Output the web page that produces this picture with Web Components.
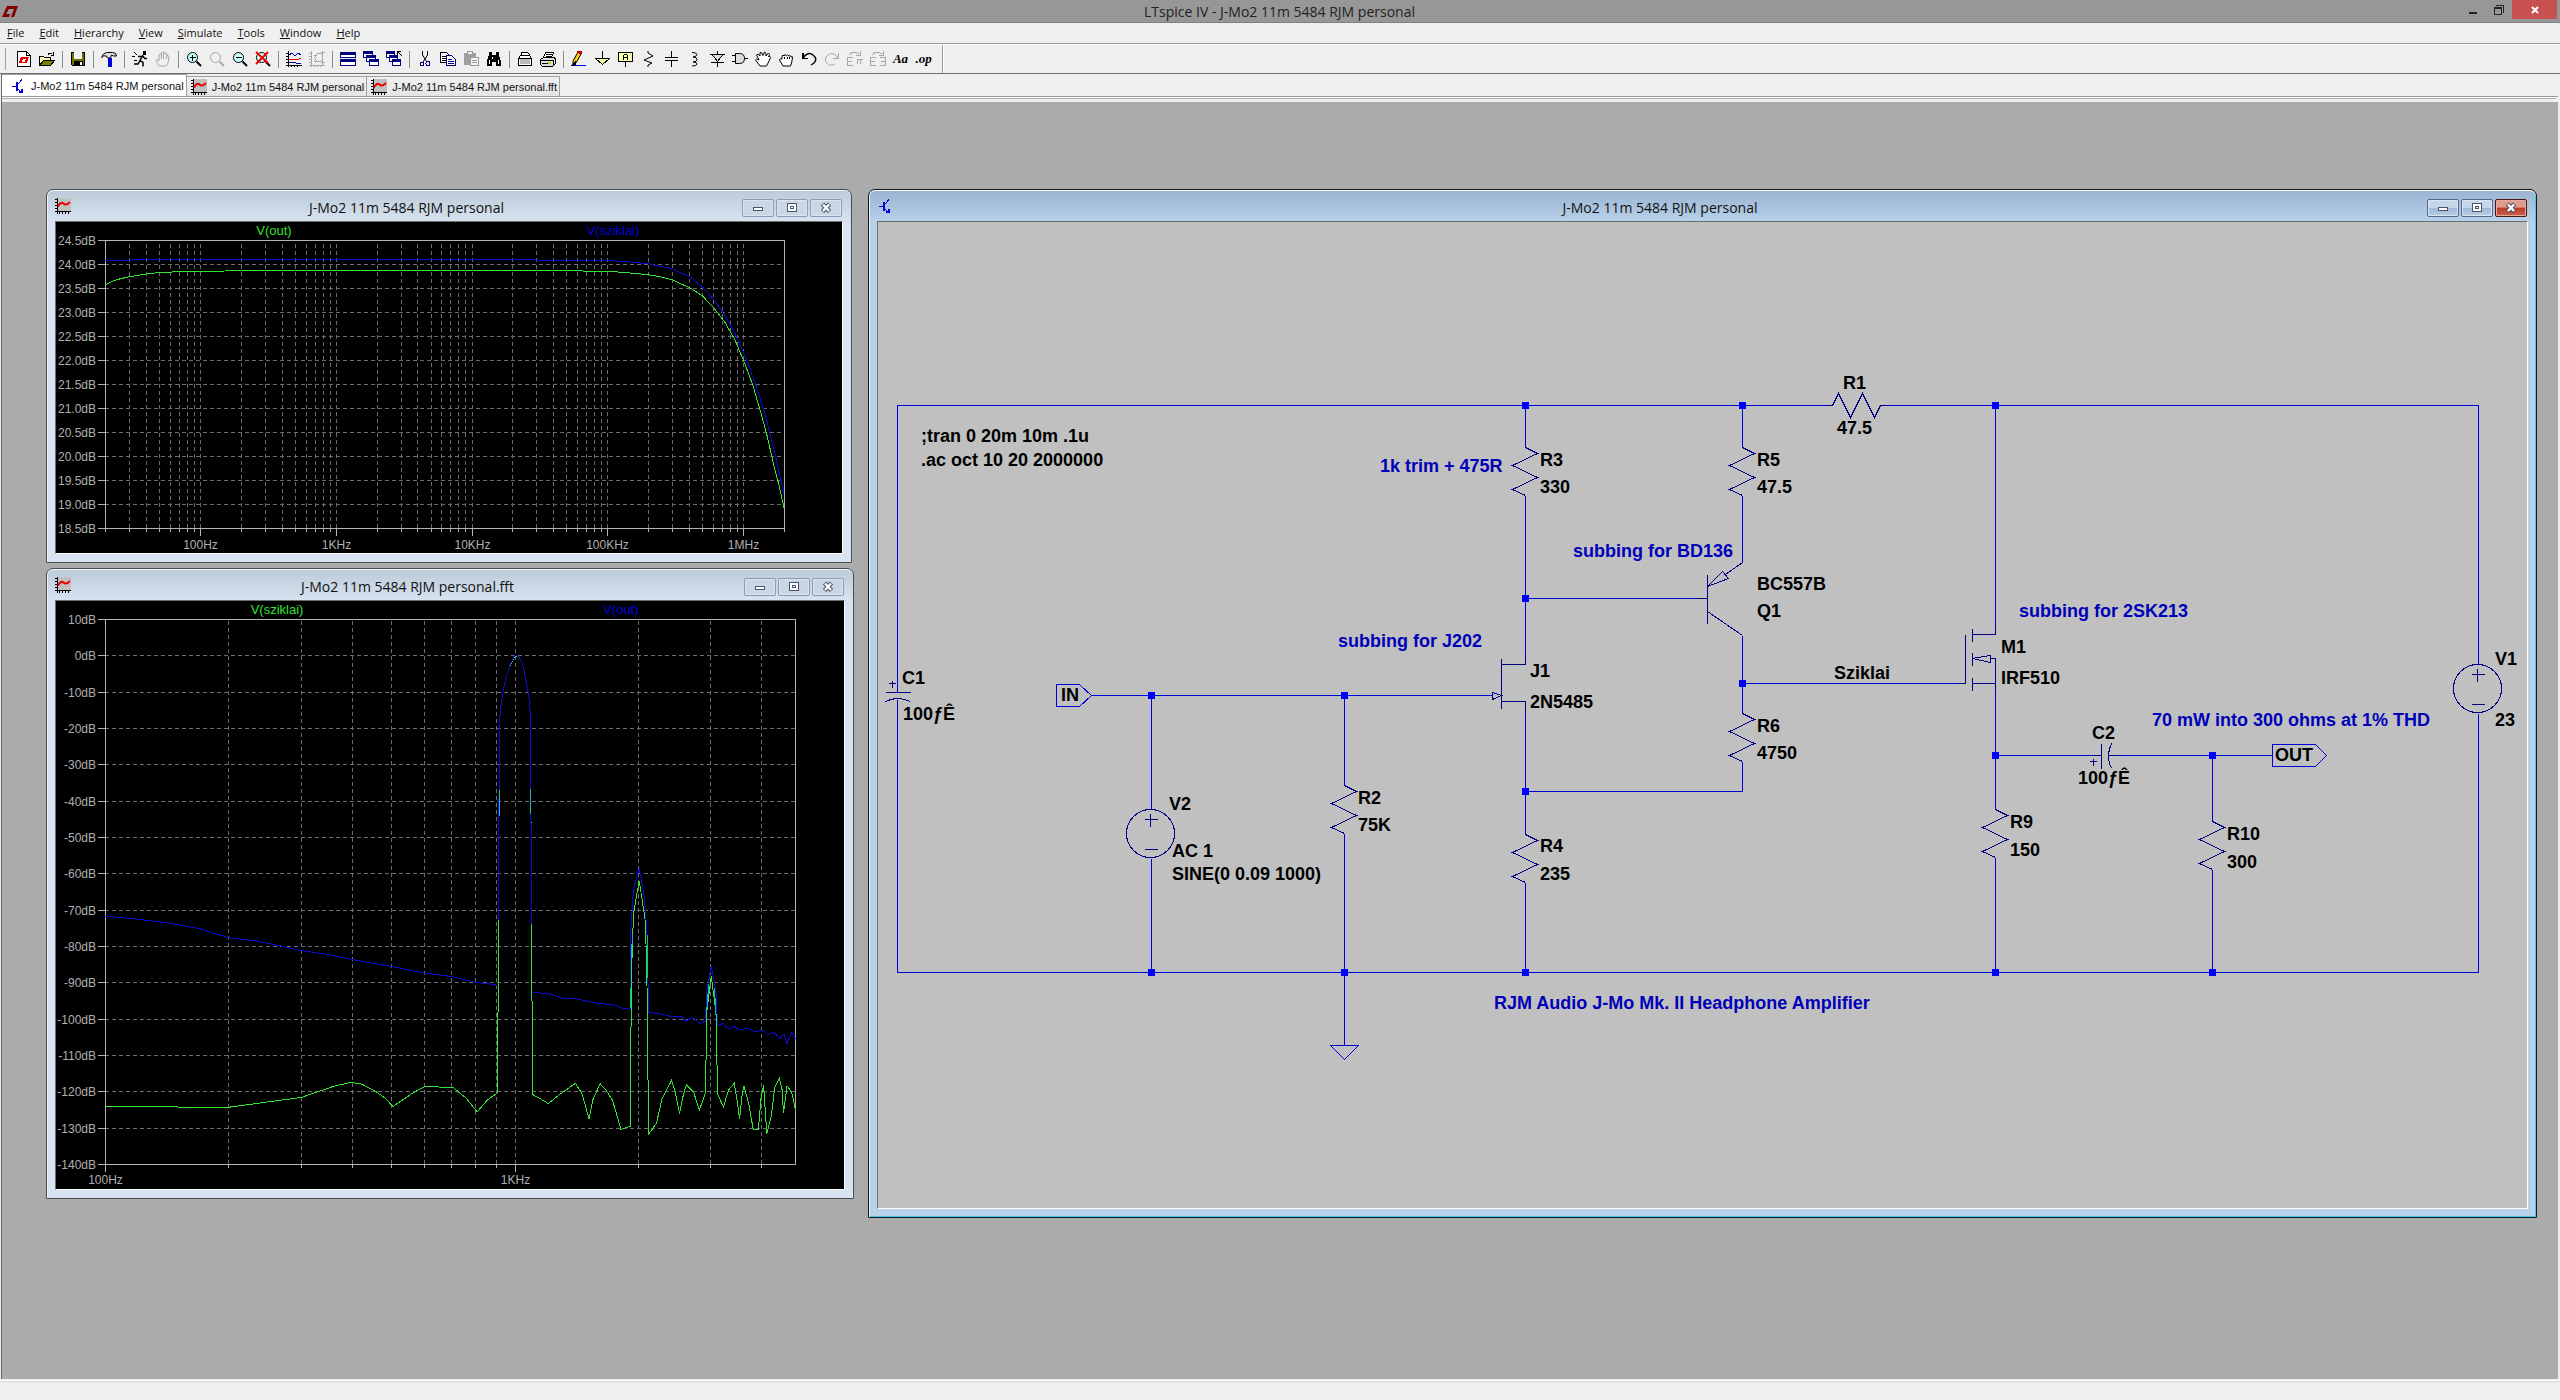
<!DOCTYPE html>
<html lang="en">
<head>
<meta charset="utf-8">
<title>LTspice IV - J-Mo2 11m 5484 RJM personal</title>
<style>
  html, body { height: 100%; }
  body { margin: 0; font-family: "Open Sans", "Noto Sans", sans-serif; color: #000; overflow: hidden; }
  .bode { left: 44px; top: 87px; width: 806px; height: 374px; }
  .fft { left: 44px; top: 466px; width: 808px; height: 631px; }
  .schematic { left: 866px; top: 87px; width: 1669px; height: 1029px; }
</style>
</head>
<body>
<spice-app>
  <spice-titlebar slot="title">LTspice IV - J-Mo2 11m 5484 RJM personal</spice-titlebar>
  <spice-menu slot="menu" items="File,Edit,Hierarchy,View,Simulate,Tools,Window,Help"></spice-menu>
  <spice-toolbar slot="toolbar"></spice-toolbar>
  <spice-tabs slot="tabs">
    <spice-tab icon="bjt" active>J-Mo2 11m 5484 RJM personal</spice-tab>
    <spice-tab icon="plot">J-Mo2 11m 5484 RJM personal</spice-tab>
    <spice-tab icon="plot">J-Mo2 11m 5484 RJM personal.fft</spice-tab>
  </spice-tabs>
  <mdi-window class="bode" icon="plot" caption="J-Mo2 11m 5484 RJM personal"><wave-plot kind="bode"></wave-plot></mdi-window>
  <mdi-window class="fft" icon="plot" caption="J-Mo2 11m 5484 RJM personal.fft"><wave-plot kind="fft"></wave-plot></mdi-window>
  <mdi-window class="schematic" icon="bjt" active caption="J-Mo2 11m 5484 RJM personal"><circuit-sheet></circuit-sheet></mdi-window>
</spice-app>

<script>
const svg = (body, w = 16, h = 16) =>
  `<svg width="${w}" height="${h}" viewBox="0 0 ${w} ${h}" fill="none" stroke="#000" shape-rendering="crispEdges" aria-hidden="true">${body}</svg>`;

const lens = (fill, col, inner, handle = '#000') =>
  `<circle cx="6.5" cy="6.5" r="5" fill="${fill}" stroke="${col}" shape-rendering="auto"/><path d="M10.5 10.5L15 15" stroke="${handle}" stroke-width="2" shape-rendering="auto"/>${inner}`;

const ICONS = {
  bjt: svg('<g stroke="#0000d8"><path d="M2 8.5h4"/><path d="M7 4v9" stroke-width="2"/><path d="M7.5 6.5L12 1.5M7.5 10.5L12.5 15.5"/><path d="M12 11v4M9 14h4" stroke-width="1.5"/></g>'),
  plot: svg('<path d="M2 0h14v13H2z" fill="#c0c0c0" stroke="none"/><path d="M2.5 0v16M0 1.5h2M0 4.5h2M0 7.5h2M0 10.5h2M0 13.5h16M4.5 14v2M7.5 14v2M10.5 14v2M13.5 14v2"/><path d="M3 8.500Q6 3 8.500 5.500T15 4" stroke="#e00" stroke-width="2" shape-rendering="auto"/>'),
  new: svg('<path d="M1.500.500h9l4 4v11h-13z" fill="#fff"/><path d="M10.500.500v4h4"/><path d="M5 6h8l-2 6H3z" fill="#e00" stroke="none"/><path d="M7 8h3l-1 3H6z" fill="#fff" stroke="none"/>'),
  open: svg('<path d="M.500 14.500v-9h4l1 1h6v3" fill="#ffffb0"/><path d="M.500 14.500l4-5h11l-4 5z" fill="#808000"/><path d="M9 3.500q2-3 4.500 0M14.500 1v3h-3"/>'),
  save: svg('<path d="M1.500 1.500h13v13h-12l-1-1z" fill="#707000"/><path d="M4 1h8v7H4z" fill="#f0f0f0" stroke="none"/><path d="M4 10h9v5H4z" fill="#000" stroke="none"/><path d="M10 11h2v3h-2z" fill="#f0f0f0" stroke="none"/>'),
  hammer: svg('<path d="M.500 6.500q1-4 5-5h6q4 0 4 3.500h-3l-2-1-1 3h-3l-1-2q-3-1-5 1.500z" fill="#e0e0e0" shape-rendering="auto"/><path d="M8.500 7v9" stroke="#0000e0" stroke-width="4"/>'),
  run: svg('<circle cx="12.500" cy="2" r="2" fill="#000" stroke="none"/><path d="M11 4L8 9.500l3 2v4M8 9.500L6 13H2M6 5.500h5l2 2h2" stroke-width="1.500" shape-rendering="auto"/><path d="M2 1.500l3 2M0 5.500h3M2 9h3"/>'),
  halt: svg('<path d="M4 15l-3-5q0-2 2-1l1 1V4q1-2 2 0V2q1-2 2 0V1.500q1-2 2 0V3q1-2 2 0v2q2-1 2 1l-1 6-2 3z" stroke="#a8a8a8" shape-rendering="auto"/><path d="M6.500 3v5M8.500 2v6M11.500 3v5" stroke="#a8a8a8"/>'),
  zin: svg(lens('#c8ffff', '#000', '<path d="M3.500 6.500h6M6.500 3.500v6" stroke-width="1.500"/>')),
  pan: svg(lens('none', '#a8a8a8', '', '#a8a8a8')),
  zout: svg(lens('#c8ffff', '#000', '<path d="M3.500 6.500h6" stroke-width="1.500"/>')),
  zfit: svg(lens('#c8ffff', '#000', '<path d="M1 1l12 11M13 1L1 13" stroke="#e00" stroke-width="2" shape-rendering="auto"/>')),
  traces: svg('<path d="M2.500 0v16M0 14.500h16M0 2.500h2M0 5.500h2M0 8.500h2M0 11.500h2M5.500 15v1M8.500 15v1M11.500 15v1"/><path d="M3 4l3-2 3 3 3-3 3 2M3 12l3-1 4 1h5" stroke="#00a"/><path d="M3 9l4-1 4 1 4-2" stroke="#e00"/>'),
  fit: svg('<path d="M2.500 0v16M0 14.500h16M0 2.500h2M0 5.500h2M0 8.500h2M0 11.500h2M5.500 15v1M8.500 15v1M11.500 15v1M5 4.500h3M5 10.500h3M13.500 0v14M12 1.500h4M12 11.500h4" stroke="#a8a8a8"/><circle cx="10" cy="6.500" r="4" stroke="#a8a8a8"/>'),
  tile: svg('<path d="M.500 1.500h15v5H.500zM.500 8.500h15v6H.500z" fill="#fff" stroke="#000080"/><path d="M0 1h16v3H0zM0 8h16v3H0z" fill="#000080" stroke="none"/>'),
  cascade: svg('<g fill="#fff" stroke="#000080"><path d="M.500.500h9v6h-9zM3.500 4.500h9v6h-9zM6.500 8.500h9v6h-9z"/><path d="M1 1.500h8M4 5.500h8M7 9.500h8" stroke-width="2"/></g>'),
  closeall: svg('<g fill="#fff" stroke="#000080"><path d="M.500.500h8v6h-8zM3.500 4.500h8v6h-8zM6.500 8.500h8v6h-8z"/><path d="M1 1.500h7M4 5.500h7M7 9.500h7" stroke-width="2"/></g><path d="M11.500 4V.500H15M12 1l4 4"/>'),
  cut: svg('<path d="M5.500 0v4L10 11M10.500 0v4L6 11" shape-rendering="auto"/><circle cx="5" cy="13" r="2" stroke="#000080"/><circle cx="11" cy="12.500" r="2" stroke="#000080"/>'),
  copy: svg('<path d="M.500 1.500h6l3 3v7h-9z" fill="#fff"/><path d="M2 5.500h4M2 7.500h4M2 9.500h4"/><path d="M6.500 4.500h5l4 4v6h-9z" fill="#fff" stroke="#000080"/><path d="M8 8.500h4M8 10.500h6M8 12.500h6" stroke="#000080"/>'),
  paste: svg('<path d="M1 2h12v12H1z" fill="#a0a0a0" stroke="none"/><path d="M4.500.500h5v3h-5z" fill="#eee" stroke="#999"/><path d="M7.500 6.500h8v8h-8z" fill="#f4f4f4" stroke="#999"/><path d="M9 9.500h5M9 11.500h5" stroke="#999"/>'),
  find: svg('<path d="M3 1h3v3h4V1h3v3l2 6v5h-5v-4H6v4H1v-5l2-6z" fill="#000" stroke="none"/><path d="M3.500 9v4M12.500 9v4M6.500 6v2" stroke="#fff"/>'),
  setup: svg('<path d="M4.500 5.500v-4h6l2 2v2" fill="#fff"/><path d="M1.500 7.500l2-3h9l2 3v7h-13z" fill="#fff"/><path d="M3 8h10v5H3z" fill="#bbb" stroke="none"/><path d="M1 7.500h14"/>'),
  print: svg('<path d="M3.500 6.500l2-5h8l-2 5" fill="#fff"/><path d="M6 3.500h6M5.500 5h5"/><path d="M.500 8.500l3-2h11l1 2v4l-3 3h-10l-2-2z" fill="#ddd"/><path d="M1 9.500h12v4M2 12.500h8" /><path d="M8 11h3v2H8z" fill="#cc0" stroke="none"/>'),
  wire: svg('<path d="M2 13l0-3L7 1l3 2-5 9z" fill="#fc0" shape-rendering="auto"/><path d="M6.500 1L10 3l1-2-3-1z" fill="#e00" stroke="#a00"/><path d="M1 14h3v-3z" fill="#000"/><path d="M2 14.500h13" stroke="#00e"/>'),
  gnd: svg('<path d="M8 0v7.500"/><path d="M1.500 7.500h14l-7 6z" fill="#e8ffa0"/>'),
  label: svg('<path d="M1.500 1.500h14v9h-14z" fill="#ffffb0"/><path d="M8.500 11v5M6.500 8.500V5l1-1.500h2l1 1.500v3.500M6.500 6.500h4"/>'),
  res: svg('<path d="M8 0v2l5 3-9 4 8 3-4 2v2" shape-rendering="auto"/>'),
  cap: svg('<path d="M8.500 0v6M2 6.500h13M2 9.500h13M8.500 10v6" stroke-width="1.500"/>'),
  ind: svg('<path d="M6 1.500q5 0 5 2t-4 2.500q4 0 4 2.500T7 11q4 0 4 2t-5 2" shape-rendering="auto"/>'),
  diode: svg('<path d="M8.500 0v16M1 3.500h15M2 11.500h13"/><path d="M3 3.500h11l-5.500 7z" fill="#ddd"/>'),
  gate: svg('<path d="M0 4.500h4M0 10.500h4M12 7.500h4"/><path d="M3.500 2.500h4q5 0 5 5t-5 5h-4z" fill="#ddd" shape-rendering="auto"/>'),
  move: svg('<path d="M5 15L.500 9Q1 7 4 9L1.500 4Q3 2 5 5L5 1.500q2-1 3 3L9.500 1q2 0 1.500 4l2.500-3q2 1 0 4l1-1q2 1 0 4l-3 6z" fill="#fff" shape-rendering="auto"/>'),
  drag: svg('<path d="M5 15L1.500 9Q2 7 4 8V5q1-2 2 0 1-3 2.500 0 1-2 2.500 0 2-1 2 1 2-1 1.500 1l-1 5-1 3z" fill="#fff" shape-rendering="auto"/><path d="M6.500 6v2M9 6v2M11.500 6v2"/>'),
  undo: svg('<path d="M2 2v5.500h5" stroke-width="1.500"/><path d="M2 7Q7 0 12 4t1 8l-3 2" stroke-width="1.500" shape-rendering="auto"/>'),
  redo: svg('<path d="M14 2v5.500H9" stroke="#a8a8a8"/><path d="M14 7Q9 0 4 4t-1 8q3 4 8 1" stroke="#a8a8a8" shape-rendering="auto"/>'),
  mirror: svg('<path d="M6 14.500H.500v-8H6M1 10.500h4M16 13v-4.500h-6V13M13 9v4M2 4q5-5 10-1M13 0v4H9" stroke="#a8a8a8"/>'),
  rotate: svg('<path d="M6 14.500H.500v-8H6M1 10.500h4M10 14.500h5.500v-8H10M15 10.500h-4M2 4q5-5 10-1M13 0v4H9" stroke="#a8a8a8"/>')
};

const define = (name, render) => customElements.define(name, class extends HTMLElement {
  connectedCallback() {
    if (!this.shadowRoot) this.attachShadow({ mode: 'open' }).innerHTML = render(this);
  }
});

define('spice-app', () => `
<style>
  :host { display: flex; flex-direction: column; height: 100vh; background: #efefef; }
  main { flex: 1; position: relative; overflow: hidden; background: #ababab;
         border-left: 1px solid #686868; margin: 0 2px 0 1px; }
  footer { height: 19px; border-top: 1px solid #fff; margin-top: 1px; box-shadow: inset 0 1px #d4d4d4; background: #efefef; }
</style>
<slot name="title"></slot><slot name="menu"></slot><slot name="toolbar"></slot><slot name="tabs"></slot>
<main><slot></slot></main><footer></footer>`);

define('spice-titlebar', () => `
<style>
  :host { display: flex; height: 22px; background: #979797; border-bottom: 1px solid #808080; font-size: 14px; line-height: 23px; }
  .logo { width: 112px; padding-left: 2px; }
  .logo svg { display: block; margin-top: 3px; }
  h1 { flex: 1; margin: 0; font: inherit; text-align: center; color: #222; }
  nav { display: flex; width: 112px; justify-content: flex-end; padding-right: 3px; }
  button { border: 0; padding: 0; background: none; width: 26px; height: 19px; display: grid; place-items: center; }
  button.close { width: 45px; background: #c75050; }
</style>
<div class="logo">${svg('<path d="M5 3H16L12 14H9L12 6H7L4 11H8L7 14H0z" fill="#800000" stroke="none" shape-rendering="auto"/>')}</div>
<h1><slot></slot></h1>
<nav>
  <button aria-label="Minimize">${svg('<path d="M4 10.500h8" stroke="#222" stroke-width="2"/>')}</button>
  <button aria-label="Restore">${svg('<path d="M3.500 5.500h7v7h-7z" stroke="#222"/><path d="M5 3.500h7.500V11" stroke="#222"/><path d="M3 6h8" stroke="#222" stroke-width="2"/>')}</button>
  <button class="close" aria-label="Close">${svg('<path d="M5 5l6 6M11 5l-6 6" stroke="#fff" stroke-width="2" shape-rendering="auto"/>')}</button>
</nav>`);

define('spice-menu', el => `
<style>
  :host { display: flex; gap: 15px; padding: 0 7px; height: 20px; border-bottom: 1px solid #999; }
  button { border: 0; padding: 0; background: none; font: 11px/20px "Open Sans", "Noto Sans", sans-serif; color: #111; }
  span { display: block; }
  span::first-letter { text-decoration: underline; }
</style>
${el.getAttribute('items').split(',').map(t => `<button><span>${t}</span></button>`).join('')}`);

define('spice-toolbar', () => {
  const groups = ['new open', 'save', 'hammer', 'run halt', 'zin pan zout zfit', 'traces fit', 'tile cascade closeall',
    'cut copy paste find', 'setup print', 'wire gnd label res cap ind diode gate move drag undo redo mirror rotate'];
  const cells = groups.map(g => g.split(' ').map(n => `<button aria-label="${n}">${ICONS[n]}</button>`).join('')).join('<i></i>');
  return `
<style>
  :host { display: flex; align-items: center; height: 28px; border-top: 1px solid #fff; border-bottom: 1px solid #707070; }
  button { width: 23px; height: 22px; border: 0; padding: 0; background: none; display: grid; place-items: center; color: #000; }
  svg { display: block; }
  i { width: 1px; height: 17px; margin: 0 3px 0 4px; background: #8c8c8c; }
  .grip { width: 3px; height: 22px; margin: 0 6px 0 3px; border-right: 1px solid #a0a0a0; box-sizing: border-box; }
  .end { height: 28px; margin-left: 7px; background: #999; box-shadow: 1px 0 #fff; }
  .txt { font: italic bold 13px/16px "Liberation Serif", serif; }
</style>
<div class="grip"></div>${cells}<button class="txt">Aa</button><button class="txt">.op</button><i class="end"></i>`;
});

define('spice-tabs', () => `
<style>
  :host { display: block; height: 28px; background: #efefef; margin: 0 2px 0 1px; border-left: 1px solid #686868; }
  div { display: flex; align-items: flex-end; height: 22px; border-bottom: 1px solid #9a9a9a; }
  hr { margin: 1px 2px 0 0; border: 0; height: 1px; background: #aaa; box-shadow: 0 -1px #fff; }
</style>
<div role="tablist"><slot></slot></div><hr>`);

define('spice-tab', el => `
<style>
  :host { display: block; }
  button { display: flex; align-items: center; gap: 5px; height: 20px; padding: 0 2px 0 4px; background: linear-gradient(#f0f0f0, #e4e4e4);
           border: 1px solid #a0a0a0; border-left-width: 0; border-bottom: 0; color: #111;
           font: 11px/20px "Liberation Sans", Arial, sans-serif; white-space: nowrap; }
  :host([active]) button { height: 22px; padding: 0 2px 0 8px; background: #fff; }
  svg { display: block; }
</style>
<button role="tab">${ICONS[el.getAttribute('icon')]}<slot></slot></button>`);

define('mdi-window', el => `
<style>
  :host { position: absolute; box-sizing: border-box; display: flex; flex-direction: column; padding: 0 8px 8px;
          border: 1px solid #474b52; border-radius: 7px 7px 1px 1px; background: linear-gradient(#bccad9, #d7e3f0 32px);
          box-shadow: inset 0 1px #f4f8fc, inset 1px 0 #eaf1f8; }
  :host([active]) { border-color: #101820; background: linear-gradient(#99b4d1, #b9d1ea 32px);
          box-shadow: inset 0 1px #fff, inset 1px 0 #e4f0fa, inset -1px -1px #45c8e6; }
  header { display: flex; align-items: center; height: 31px; flex: none; padding-right: 1px; box-sizing: border-box; }
  .icon { height: 16px; }
  .icon svg { display: block; }
  h2 { flex: 1; margin: 0; padding-top: 4px; font-weight: 400; font-size: 14px; line-height: 20px; text-align: center; color: #111; }
  nav { display: flex; gap: 2px; }
  button { width: 32px; height: 18px; margin-top: 4px; box-sizing: border-box; padding: 0; display: grid; place-items: center;
           border: 1px solid #8a9bb2; border-radius: 2px; background: #c9d6e5; box-shadow: inset 0 0 0 1px #dbe5ef; }
  :host([active]) button { border-color: #4f6a8c; background: linear-gradient(#c3d6ea 50%, #9db9d6 50%, #b6cee6); }
  :host([active]) .close { border-color: #481818; background: linear-gradient(#e09a8c 45%, #bb3a28 50%, #d0604c); box-shadow: inset 0 0 0 1px #e8a89c; }
  button svg { display: block; }
  section { flex: 1; min-height: 0; display: flex; border: 1px solid; border-color: #6c6c6c #fff #fff #6c6c6c; }
  ::slotted(*) { flex: 1; min-width: 0; }
</style>
<header>
  <span class="icon">${ICONS[el.getAttribute('icon')]}</span>
  <h2>${el.getAttribute('caption')}</h2>
  <nav>
    <button aria-label="Minimize">${svg('<path d="M3.500 7.500h9v3h-9z" fill="#fff" stroke="#4a5468"/>')}</button>
    <button aria-label="Maximize">${svg('<path d="M3.500 3.500h9v8h-9z" fill="#fff" stroke="#4a5468"/><path d="M6.500 6.500h3v2h-3z" stroke="#4a5468"/>')}</button>
    <button class="close" aria-label="Close">${svg('<g shape-rendering="auto"><path d="M4.500 4l7 7.500M11.500 4l-7 7.500" stroke="#4a5468" stroke-width="4.500"/><path d="M5 4.500l6 6.500M11 4.500L5 11" stroke="#fff" stroke-width="2.500"/></g>')}</button>
  </nav>
</header>
<section><slot></slot></section>`);

/* Waveform viewer. Traces are polylines in the units given by "span", stretched over the plot box. */
const PLOTS = {
  bode: {
    view: [56, 222, 786, 331], box: [105, 240, 784, 528], span: [1300, 864],
    y: { from: 24.5, step: 0.5, n: 12, digits: 1 }, fmin: 20, fmax: 2e6, labels: { 100: '100Hz', 1e3: '1KHz', 1e4: '10KHz', 1e5: '100KHz', 1e6: '1MHz' },
    legend: [['V(out)', 274, 235, '#35e235'], ['V(sziklai)', 613, 235, '#0000d8']], labelY: 549,
    traces: [
      ['#0a0ad0', '0,59 105,58 107,56 823,56 825,59 960,60 1000,64 1040,70 1085,85 1120,110 1142,138 1165,178 1185,223 1205,278 1225,348 1245,433 1265,533 1283,648 1299,760'],
      ['#35e235', '0,133 15,121 30,114 45,109 80,100 105,96 150,93 310,90 795,90 960,92 995,96 1040,103 1060,108 1085,118 1120,143 1142,165 1165,203 1185,243 1205,298 1225,373 1240,438 1255,518 1267,588 1280,678 1290,738 1299,802']
    ]
  },
  fft: {
    view: [56, 601, 788, 588], box: [105, 619, 795, 1164], span: [1320, 1315],
    y: { from: 10, step: 10, n: 15, digits: 0 }, fmin: 100, fmax: 4830, labels: { 100: '100Hz', 1e3: '1KHz' },
    legend: [['V(sziklai)', 277, 614, '#35e235'], ['V(out)', 621, 614, '#0000e0']], labelY: 1184,
    traces: [
      ['#35e235', '0,1175 120,1175 150,1177 235,1177 375,1153 437,1126 470,1117 490,1121 515,1137 535,1155 550,1175 585,1145 610,1127 665,1129 690,1155 711,1188 730,1160 750,1142 752,724 753,420 754,240 757,205 760,178 766,140 773,113 783,88 790,89 798,108 805,150 811,195 813,236 815,730 817,1146 830,1155 847,1168 870,1145 899,1119 912,1145 925,1205 932,1160 946,1120 957,1135 970,1160 986,1230 1004,1223 1006,860 1010,710 1021,630 1033,730 1036,885 1039,1242 1054,1215 1065,1155 1083,1112 1090,1140 1098,1192 1105,1150 1111,1123 1125,1140 1136,1184 1148,1142 1150,950 1159,860 1168,950 1171,1145 1182,1176 1192,1135 1203,1119 1207,1150 1213,1204 1217,1155 1221,1125 1230,1165 1239,1230 1249,1230 1254,1155 1259,1124 1265,1242 1274,1195 1280,1130 1289,1107 1294,1130 1297,1190 1304,1125 1313,1142 1320,1183'],
      ['#0a0ad0', '0,716 60,723 120,732 180,746 235,768 290,776 340,789 370,798 420,807 470,820 550,838 610,853 665,862 710,876 740,880 750,883'],
      ['#0a0ad0', '752,724 752,600 753,400 754,240 757,205 760,178 766,140 773,113 783,86 790,89 798,108 805,150 811,195 813,236 815,736'],
      ['#0a0ad0', '817,900 848,903 875,914 900,915 940,926 970,929 990,938 1004,940 1005,750 1010,650 1021,600 1031,670 1036,760 1039,948 1060,951 1085,959 1100,957 1110,969 1123,960 1137,975 1148,969 1150,900 1159,835 1168,900 1171,980 1182,974 1191,989 1203,981 1212,991 1230,986 1242,995 1258,991 1266,1001 1280,997 1290,1012 1298,1000 1304,1024 1312,996 1320,1013']
    ],
    overlap: [[754, 411, 754, 474], [813, 408, 813, 468], [1008, 760, 1006, 820], [1005, 890, 1005, 938], [1036, 762, 1036, 865], [1154, 880, 1150, 950], [1165, 890, 1168, 955]]
  }
};

define('wave-plot', el => {
  const p = PLOTS[el.getAttribute('kind')], [l, t, r, b] = p.box, W = r - l, H = b - t;
  const fx = f => Math.round(l + Math.log10(f / p.fmin) / Math.log10(p.fmax / p.fmin) * W) + .5;
  const sx = v => (l + .5 + v / p.span[0] * W).toFixed(1), sy = v => (t + .5 + v / p.span[1] * H).toFixed(1);
  let grid = '', tick = '', text = '';
  for (let i = 0; i <= p.y.n; i++) {
    const y = Math.round(t + i * H / p.y.n) + .5, v = p.y.from - i * p.y.step;
    if (i && i < p.y.n) grid += `M${l} ${y}H${r}`;
    tick += `M${l - 7} ${y}H${l}`;
    text += `<text x="96" y="${y + 4}" text-anchor="end">${v.toFixed(p.y.digits)}dB</text>`;
  }
  for (let d = 10; d < 1e7; d *= 10) for (let k = 1; k < 10; k++) {
    const f = d * k;
    if (f < p.fmin || f > p.fmax) continue;
    const x = fx(f);
    if (f > p.fmin && f < p.fmax) grid += `M${x} ${b}V${t}`;
    tick += `M${x} ${b}v${k === 1 ? 8 : 4}`;
    if (p.labels[f]) text += `<text x="${x}" y="${p.labelY}" text-anchor="middle">${p.labels[f]}</text>`;
  }
  const lines = p.traces.map(([c, pts]) =>
    `<polyline stroke="${c}" points="${pts.split(' ').map(q => { const [x, y] = q.split(','); return sx(x) + ',' + sy(y); }).join(' ')}"/>`).join('');
  const cyan = (p.overlap || []).map(([a, c, d, e]) => `<path stroke="#18b8b8" d="M${sx(a)} ${sy(c)}L${sx(d)} ${sy(e)}"/>`).join('');
  return `
<style>
  :host { display: block; background: #000; }
  svg { display: block; width: 100%; height: 100%; }
  text { font: 12px "Liberation Sans", Arial, sans-serif; fill: #b0b0b0; stroke: none; }
  .legend text { font-size: 13px; fill: inherit; }
</style>
<svg viewBox="${p.view.join(' ')}" preserveAspectRatio="xMinYMin" fill="none" stroke-width="1" shape-rendering="crispEdges">
  <path d="${grid}" stroke="#6c6c6c" stroke-dasharray="4 3"/>
  <path d="M${l + .5} ${t + .5}H${r + .5}V${b + .5}H${l + .5}z${tick}" stroke="#b4b4b4"/>
  ${lines}${cyan}${text}
  <g class="legend">${p.legend.map(([s, x, y, c]) => `<g fill="${c}"><text x="${x}" y="${y}" text-anchor="middle">${s}</text></g>`).join('')}</g>
</svg>`;
});

/* Schematic editor. */
define('circuit-sheet', () => {
  const rv = (x, y) => `M${x} ${y}l12 6l-25 12l25 12l-25 12l13 6`;
  const source = (x, y) => `<circle cx="${x}" cy="${y}" r="24"/><path d="M${x - 6} ${y - 14}h13M${x} ${y - 20}v13M${x - 6} ${y + 16}h13"/>`;
  const nodes = [[1525, 405], [1742, 405], [1995, 405], [1525, 598], [1151, 695], [1344, 695], [1742, 683], [1995, 755], [2212, 755], [1525, 791],
    [1151, 972], [1344, 972], [1525, 972], [1995, 972], [2212, 972]];
  const names = [[921, 442, ';tran 0 20m 10m .1u'], [921, 466, '.ac oct 10 20 2000000'], [902, 684, 'C1'], [903, 720, '100ƒÊ'], [1061, 701, 'IN'],
    [1540, 466, 'R3'], [1540, 493, '330'], [1843, 389, 'R1'], [1837, 434, '47.5'], [1757, 466, 'R5'], [1757, 493, '47.5'],
    [1757, 590, 'BC557B'], [1757, 617, 'Q1'], [1530, 677, 'J1'], [1530, 708, '2N5485'], [1834, 679, 'Sziklai'], [1757, 732, 'R6'], [1757, 759, '4750'],
    [2001, 653, 'M1'], [2001, 684, 'IRF510'], [2092, 739, 'C2'], [2078, 784, '100ƒÊ'], [2275, 761, 'OUT'], [2495, 665, 'V1'], [2495, 726, '23'],
    [2010, 828, 'R9'], [2010, 856, '150'], [2227, 840, 'R10'], [2227, 868, '300'], [1169, 810, 'V2'], [1172, 857, 'AC 1'], [1172, 880, 'SINE(0 0.09 1000)'],
    [1358, 804, 'R2'], [1358, 831, '75K'], [1540, 852, 'R4'], [1540, 880, '235']];
  const notes = [[1380, 472, '1k trim + 475R'], [1338, 647, 'subbing for J202'], [1573, 557, 'subbing for BD136'], [2019, 617, 'subbing for 2SK213'],
    [2152, 726, '70 mW into 300 ohms at 1% THD'], [1494, 1009, 'RJM Audio J-Mo Mk. II Headphone Amplifier']];
  const put = a => a.map(([x, y, s]) => `<text x="${x}" y="${y}">${s}</text>`).join('');
  return `
<style>
  :host { display: block; background: #c0c0c0; }
  svg { display: block; width: 100%; height: 100%; }
  text { font: bold 18px "Liberation Sans", Arial, sans-serif; }
</style>
<svg viewBox="878 222 1649 986" preserveAspectRatio="xMinYMin" fill="none" stroke-width="1" shape-rendering="crispEdges">
  <g transform="translate(.5 .5)">
  <path stroke="#0000d8" d="M897 692V405H1832M1880 405H2478V664M2478 713V972H897V699
    M1525 405V447M1525 495V664M1525 598H1700M1742 405V447M1742 495V562M1742 635V713M1742 761V791H1525M1525 701V834M1525 882V972
    M1995 405V634M1995 683V809M1995 857V972M1742 683H1960M1995 755H2101M2108 755H2272M2212 755V821M2212 869V972
    M1091 695H1491M1151 695V809M1151 858V972M1344 695V785M1344 833V1045M1330 1045H1358L1344 1059z
    M1056 684H1079L1091 695L1079 706H1056zM2272 744H2315L2326 755L2315 766H2272z"/>
  <g stroke="#000080">
    <path d="${rv(1525, 447)}${rv(1742, 447)}${rv(1742, 713)}${rv(1525, 834)}${rv(1344, 785)}${rv(1995, 809)}${rv(2212, 821)}
      M1826 405h6l6 -12l12 24l12 -24l12 24l6 -12h6
      M1501 658V708M1501 664H1525V655M1501 701H1525V710M1501 695L1492 692V699z
      M1695 598H1707M1707 574V623M1707 611L1742 635M1742 562L1725 574M1707 586L1722 571L1728 578z
      M1958 683H1965V634M1972 628V641M1972 652V665M1972 677V690M1972 634H1995V625M1972 683H1995M1995 692V658H1990M1972 658L1990 655V662z
      M2092 755H2101M2101 743V768M2108 755h8M2111 743q-6 12 0 25M2089 761h7M2093 758v7
      M885 692H910M885 701q12 -6 25 0M888 683h7M892 680v7"/>
    ${source(2477, 688)}${source(1150, 833)}
  </g>
  <g fill="#0000ff">${nodes.map(([x, y]) => `<rect x="${x - 3.5}" y="${y - 3.5}" width="7" height="7"/>`).join('')}</g>
  </g>
  <g fill="#000">${put(names)}</g>
  <g fill="#0000b8">${put(notes)}</g>
</svg>`;
});
</script>
</body>
</html>
